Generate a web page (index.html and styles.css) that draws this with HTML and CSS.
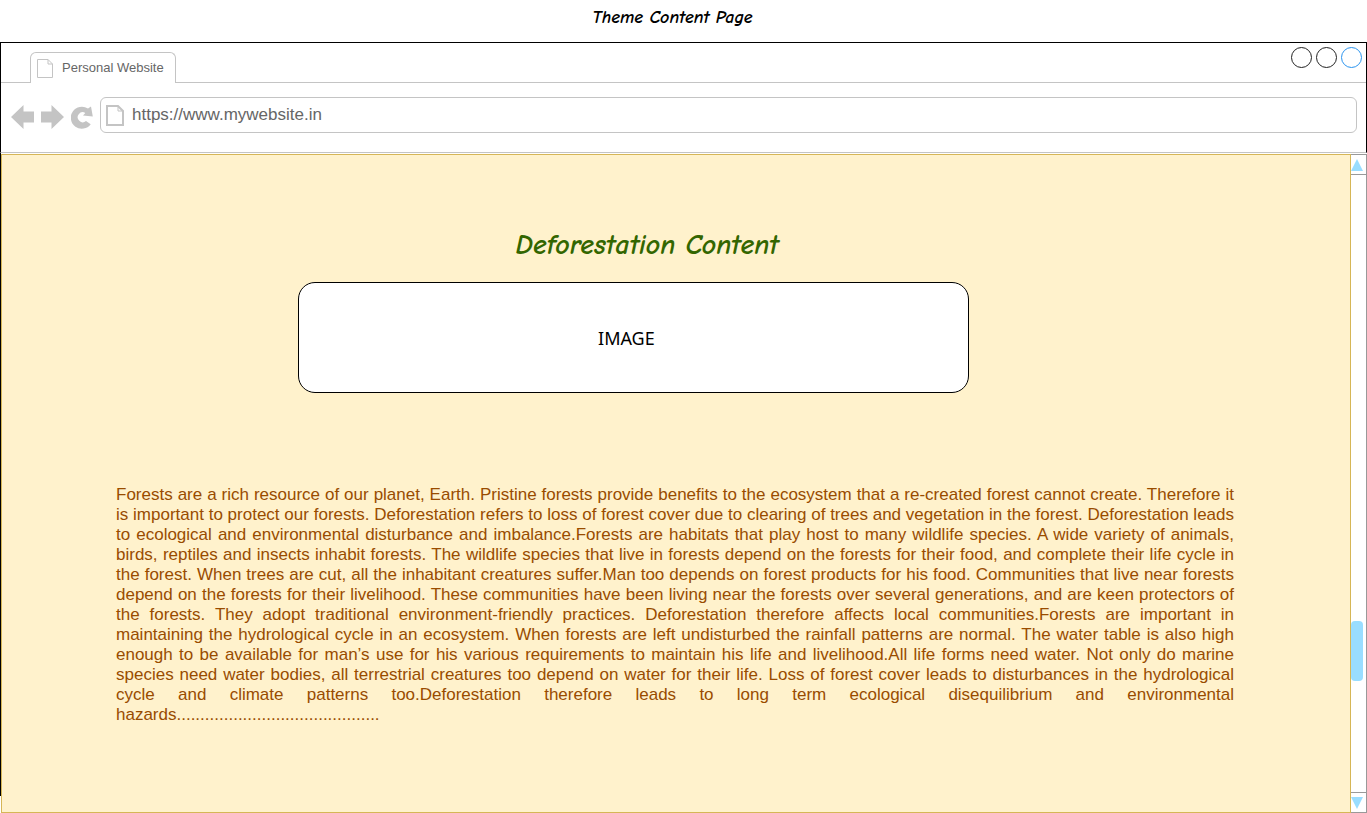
FILE: index.html
```html
<!DOCTYPE html>
<html lang="en">
<head>
<meta charset="utf-8">
<title>Theme Content Page</title>
<link rel="stylesheet" href="styles.css">
</head>
<body>
<h1 class="page-title">Theme Content Page</h1>
<div class="browser">
  <div class="tab-bar">
    <div class="tab-lead"></div>
    <button class="tab" type="button">
      <svg class="tab-icon" width="16" height="19" viewBox="0 0 16 19" fill="none" stroke="#c4c4c4"><path d="M.5.5h10.500l4.500 4.500v13.500h-15zM11 .5V5h4.500"/></svg>
      <span>Personal Website</span>
    </button>
    <div class="tab-rest">
      <button class="dot" type="button" aria-label="Minimize"></button>
      <button class="dot" type="button" aria-label="Maximize"></button>
      <button class="dot dot-close" type="button" aria-label="Close"></button>
    </div>
  </div>
  <div class="toolbar">
    <button class="nav" type="button" aria-label="Back"><svg width="23" height="24" viewBox="0 0 23 24" fill="#c4c4c4"><path d="M0 12 12.500 0v6.500H23v11H12.500V24z"/></svg></button>
    <button class="nav" type="button" aria-label="Forward"><svg width="23" height="24" viewBox="0 0 23 24" fill="#c4c4c4"><path d="M23 12 10.500 0v6.500H0v11h10.500V24z"/></svg></button>
    <button class="nav" type="button" aria-label="Reload"><svg width="22" height="24" viewBox="0 0 22 24" fill="#c4c4c4"><path d="M20 1.500 21.800 11.500 12 10.500l2.300-2.600A5 5 0 1 0 15 16l4.700 3.200A11 11 0 1 1 17 3.600z"/></svg></button>
    <label class="address">
      <svg width="18" height="21" viewBox="0 0 18 21" fill="none" stroke="#c4c4c4" stroke-width="2"><path d="M1 1h11l5 5v14H1z"/><path d="M12 1v5h5" stroke-width="1"/></svg>
      <input class="url" type="text" value="https://www.mywebsite.in" aria-label="Address">
    </label>
  </div>
  <div class="viewport">
    <main class="content">
      <h2 class="heading">Deforestation Content</h2>
      <div class="image-box">IMAGE</div>
      <p class="article">Forests are a rich resource of our planet, Earth. Pristine forests provide benefits to the ecosystem that a re-created forest cannot create. Therefore it is important to protect our forests. Deforestation refers to loss of forest cover due to clearing of trees and vegetation in the forest. Deforestation leads to ecological and environmental disturbance and imbalance.Forests are habitats that play host to many wildlife species. A wide variety of animals, birds, reptiles and insects inhabit forests. The wildlife species that live in forests depend on the forests for their food, and complete their life cycle in the forest. When trees are cut, all the inhabitant creatures suffer.Man too depends on forest products for his food. Communities that live near forests depend on the forests for their livelihood. These communities have been living near the forests over several generations, and are keen protectors of the forests. They adopt traditional environment-friendly practices. Deforestation therefore affects local communities.Forests are important in maintaining the hydrological cycle in an ecosystem. When forests are left undisturbed the rainfall patterns are normal. The water table is also high enough to be available for man’s use for his various requirements to maintain his life and livelihood.All life forms need water. Not only do marine species need water bodies, all terrestrial creatures too depend on water for their life. Loss of forest cover leads to disturbances in the hydrological cycle and climate patterns too.Deforestation therefore leads to long term ecological disequilibrium and environmental hazards...........................................</p>
    </main>
    <div class="scrollbar">
      <button class="scroll-btn scroll-up" type="button" aria-label="Scroll up"><svg width="12" height="12" viewBox="0 0 12 12" fill="#99ddff"><path d="M0 12 6 0l6 12z"/></svg></button>
      <div class="track"><div class="thumb"></div></div>
      <button class="scroll-btn scroll-down" type="button" aria-label="Scroll down"><svg width="12" height="12" viewBox="0 0 12 12" fill="#99ddff"><path d="M0 0 6 12l6-12z"/></svg></button>
    </div>
  </div>
</div>
</body>
</html>
```
FILE: styles.css
```css
* { box-sizing: border-box; }

body {
  margin: 0;
  min-height: 100vh;
  display: flex;
  flex-direction: column;
  background: #fff;
  font-family: "Liberation Sans", Arial, sans-serif;
}

button {
  padding: 0;
  border: 0;
  background: none;
  font: inherit;
  display: flex;
  align-items: center;
}

.page-title {
  margin: 0;
  padding: 6px 22px 12px 0;
  font: italic bold 18px/24px "Comic Sans MS", "Comic Neue", Lato, sans-serif;
  text-align: center;
}

.browser {
  flex: 1;
  display: flex;
  flex-direction: column;
  border-top: 1px solid #000;
}

.tab-bar {
  display: flex;
  height: 40px;
  border: solid #000;
  border-width: 0 1px;
}

.tab-lead {
  width: 29px;
  border-bottom: 1px solid #c4c4c4;
}

.tab {
  align-self: flex-end;
  height: 31px;
  gap: 9px;
  padding: 0 11px 2px 6px;
  border: 1px solid #c4c4c4;
  border-bottom: 0;
  border-radius: 6px 6px 0 0;
  color: #666;
  font-size: 13px;
}

.tab-icon { margin-top: 3px; }

.tab-rest {
  flex: 1;
  display: flex;
  justify-content: flex-end;
  gap: 4px;
  padding: 4px 4px 0 0;
  border-bottom: 1px solid #c4c4c4;
}

.dot {
  width: 21px;
  height: 21px;
  border: 1px solid #222;
  border-radius: 50%;
}

.dot-close { border-color: #2a94ef; }

.toolbar {
  display: flex;
  align-items: center;
  gap: 7px;
  height: 70px;
  padding: 0 9px 5px 10px;
  border: solid #000;
  border-width: 0 1px;
  border-bottom: 1px solid #c4c4c4;
}

.nav { padding-top: 3px; }

.address {
  flex: 1;
  display: flex;
  align-items: center;
  gap: 8px;
  height: 36px;
  padding: 0 5px;
  border: 1px solid #c4c4c4;
  border-radius: 6px;
}

.url {
  flex: 1;
  padding: 0;
  border: 0;
  outline: 0;
  background: none;
  color: #666;
  font: 17px/20px "Liberation Sans", Arial, sans-serif;
}

.viewport {
  flex: 1;
  display: flex;
  padding-top: 1px;
  background: linear-gradient(#000, #000) no-repeat 0 0 / 1px calc(100% - 17px);
}

.content {
  flex: 1;
  margin-left: 1px;
  padding: 70px 116px 80px 114px;
  border: 1px solid #d6b656;
  background: #fff2cc;
}

.heading {
  margin: 0 56px 17px 0;
  color: #336600;
  font: italic bold 28px/40px "Comic Sans MS", "Comic Neue", Lato, sans-serif;
  text-align: center;
}

.image-box {
  display: flex;
  align-items: center;
  justify-content: center;
  width: 60%;
  height: 111px;
  margin-left: 182px;
  padding-right: 14px;
  border: 1px solid #000;
  border-radius: 17px;
  background: #fff;
  font: 18px/20px "Noto Sans", Verdana, sans-serif;
}

.article {
  margin: 92px 0 0;
  color: #994c00;
  font-size: 17px;
  line-height: 20px;
  text-align: justify;
}

.scrollbar {
  display: flex;
  flex-direction: column;
  width: 16px;
  border: 1px solid #999;
  border-left: 0;
}

.scroll-btn {
  height: 20px;
}

.scroll-up { border-bottom: 1px solid #999; }
.scroll-down { border-top: 1px solid #999; }

.track {
  flex: 1;
  display: flex;
  flex-direction: column;
  justify-content: flex-end;
  padding-bottom: 111px;
}

.thumb {
  width: 12px;
  height: 60px;
  border-radius: 4px;
  background: #99ddff;
}
```
